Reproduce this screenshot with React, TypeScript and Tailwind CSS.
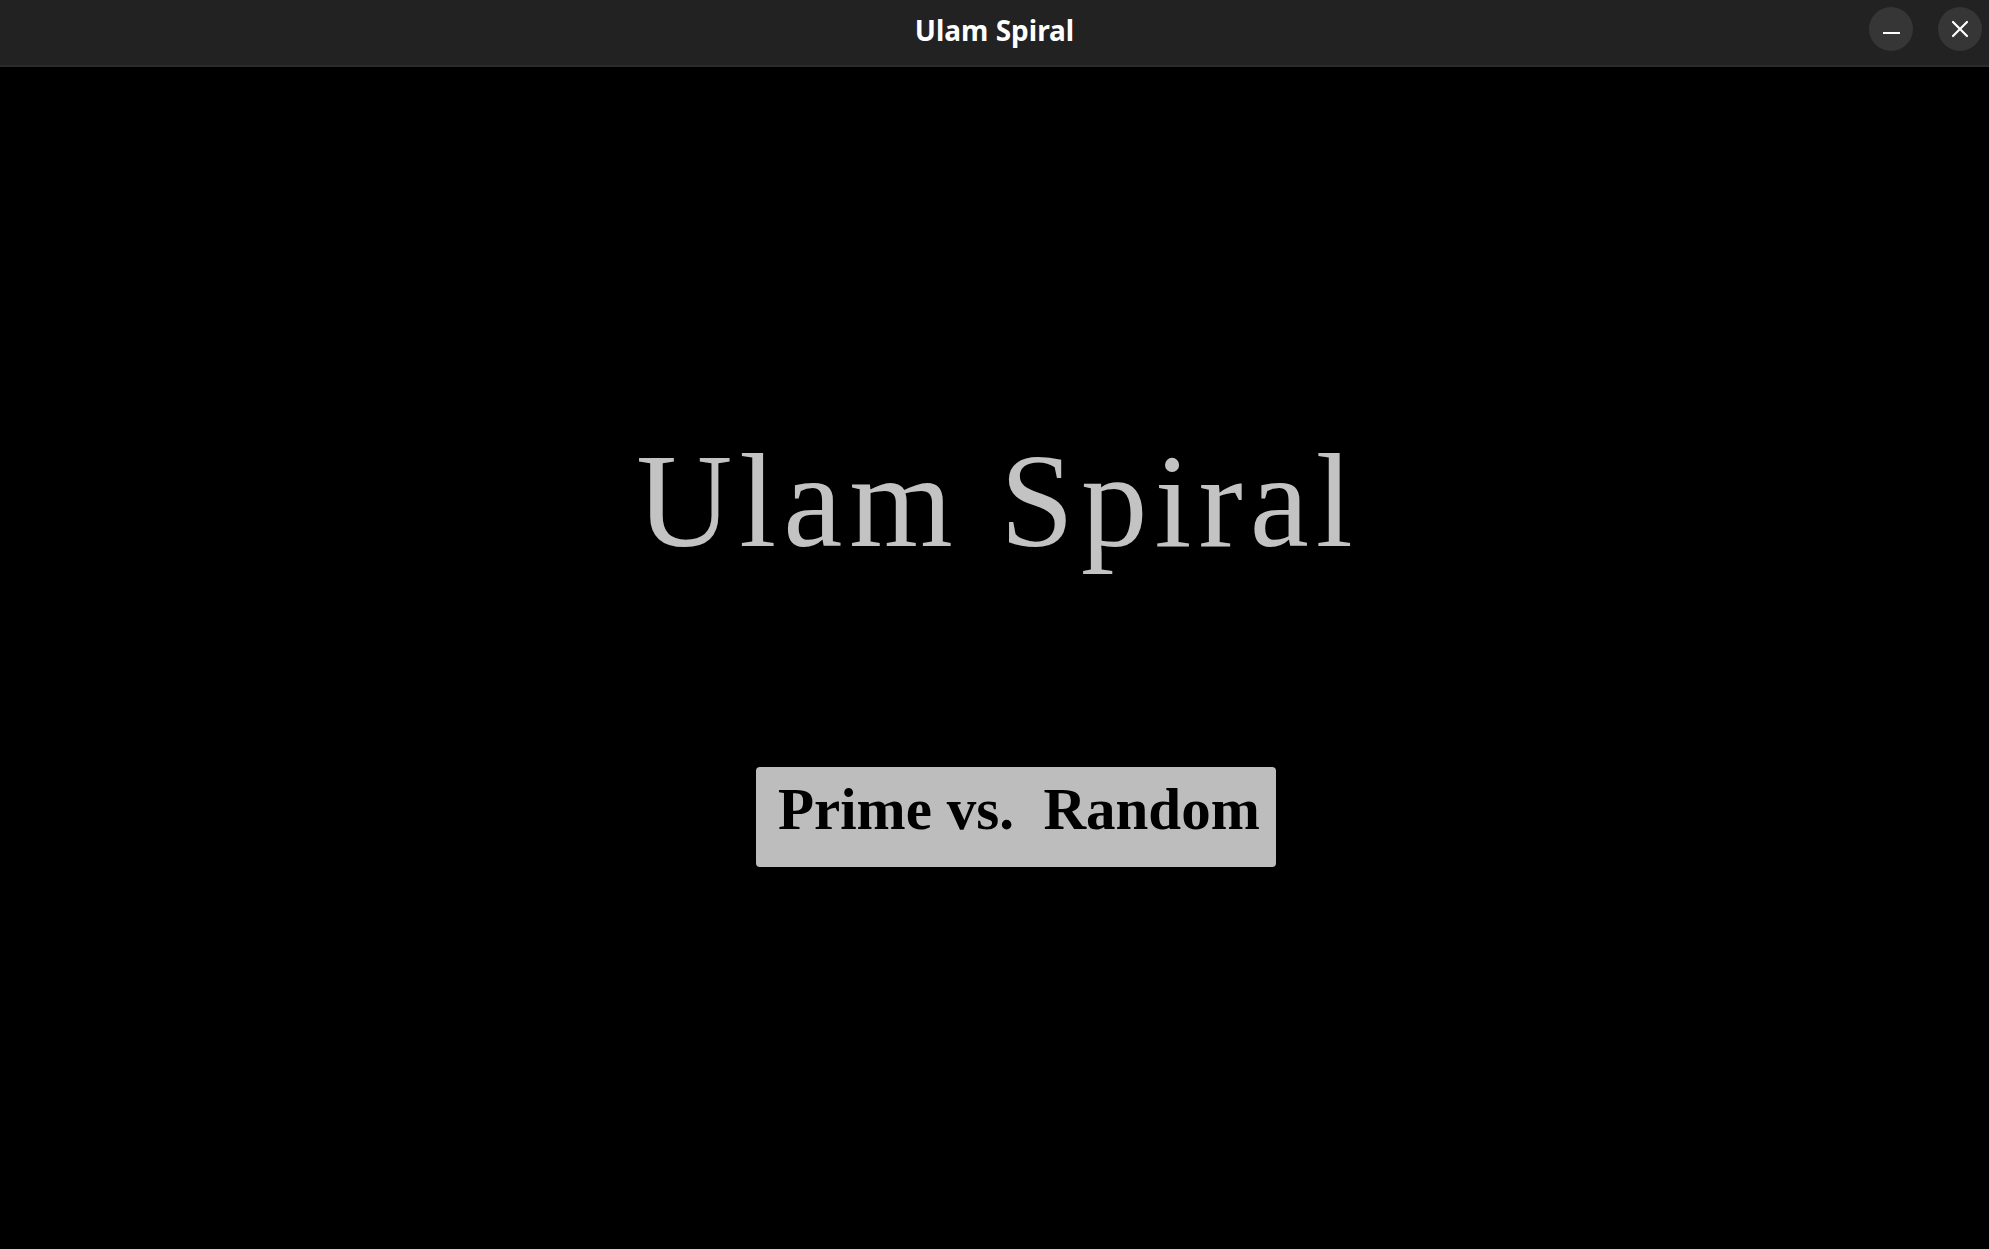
const TitleBar = () => {
	return (
		<div className="h-[67px] shrink-0 bg-[#222222] border-b-2 border-[#2b2b2b] relative flex items-center justify-center">
			<span className="text-white text-[28px] font-bold font-['Noto_Sans',sans-serif] leading-none -mt-[6px]">
				Ulam Spiral
			</span>
			<div className="absolute right-[7px] top-[7px] flex gap-[25px]">
				<button className="w-[44px] h-[44px] rounded-full bg-[#363636] flex items-center justify-center">
					<span className="block w-[17px] h-[2px] bg-white mt-[8px]" />
				</button>
				<button className="w-[44px] h-[44px] rounded-full bg-[#363636] flex items-center justify-center">
					<svg width="18" height="18" viewBox="0 0 18 18" fill="none">
						<path d="M2 2L16 16M16 2L2 16" stroke="white" strokeWidth="2.2" strokeLinecap="round" />
					</svg>
				</button>
			</div>
		</div>
	);
};

const App = () => {
	return (
		<div className="w-full h-[1249px] flex flex-col bg-black overflow-hidden">
			<TitleBar />
			<div className="flex-1 flex flex-col items-center">
				<h1 className="mt-[368px] h-[133px] pl-[7px] text-[133px] leading-none tracking-[7px] text-[#c3c3c3] font-['Liberation_Serif',serif] font-normal whitespace-nowrap">
					Ulam Spiral
				</h1>
				<button className="mt-[199px] ml-[43px] w-[520px] h-[100px] rounded-[4px] bg-[#bdbdbd] flex items-start pt-[13px] pl-[22px]">
					<span className="text-[59px] leading-none font-bold text-black font-['Liberation_Serif',serif] whitespace-pre">
						Prime vs.  Random
					</span>
				</button>
			</div>
		</div>
	);
};

export default App;
